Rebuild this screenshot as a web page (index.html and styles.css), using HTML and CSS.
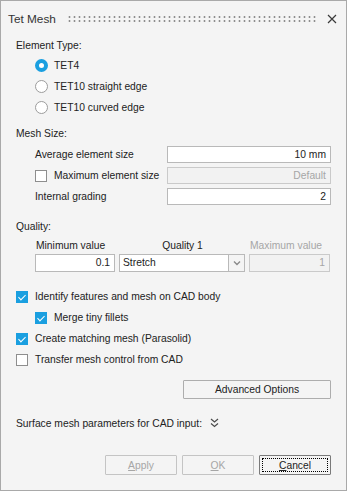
FILE: index.html
```html
<!DOCTYPE html>
<html lang="en">
<head>
  <meta charset="UTF-8" />
  <title>Tet Mesh</title>
  <link rel="stylesheet" href="styles.css">
</head>
<body>
  <div class="dialog">
    <!-- Barra de título -->
    <div class="titlebar">
      <span class="title">Tet Mesh</span>
      <span class="grip"></span>
      <svg class="close" width="10" height="10" viewBox="0 0 10 10">
        <path d="M1 1 L9 9 M9 1 L1 9" stroke="#3a3a3a" stroke-width="1.2" fill="none" />
      </svg>
    </div>

    <div class="content">
      <!-- Tipo de elemento -->
      <div class="group-label">Element Type:</div>
      <div class="radio-row"><span class="radio checked"></span>TET4</div>
      <div class="radio-row"><span class="radio"></span>TET10 straight edge</div>
      <div class="radio-row"><span class="radio"></span>TET10 curved edge</div>

      <!-- Tamaño de malla -->
      <div class="group-label mesh-label">Mesh Size:</div>
      <div class="field-row">
        <span class="field-name">Average element size</span>
        <span class="input">10 mm</span>
      </div>
      <div class="field-row">
        <span class="field-name"><span class="check"></span><span class="check-text">Maximum element size</span></span>
        <span class="input disabled">Default</span>
      </div>
      <div class="field-row">
        <span class="field-name">Internal grading</span>
        <span class="input">2</span>
      </div>

      <!-- Calidad -->
      <div class="group-label quality-label">Quality:</div>
      <div class="quality-grid">
        <span class="q-head">Minimum value</span>
        <span class="q-head center">Quality 1</span>
        <span class="q-head muted">Maximum value</span>
        <span class="input">0.1</span>
        <span class="select">
          <span class="select-text">Stretch</span>
          <span class="select-btn">
            <svg width="8" height="6" viewBox="0 0 8 6"><path d="M1 1.5 L4 4.5 L7 1.5" stroke="#8a8a8a" stroke-width="1.4" fill="none" /></svg>
          </span>
        </span>
        <span class="input disabled">1</span>
      </div>

      <!-- Opciones -->
      <div class="checks">
        <div class="check-row"><span class="check checked"></span>Identify features and mesh on CAD body</div>
        <div class="check-row sub"><span class="check checked"></span>Merge tiny fillets</div>
        <div class="check-row"><span class="check checked"></span>Create matching mesh (Parasolid)</div>
        <div class="check-row"><span class="check"></span>Transfer mesh control from CAD</div>
      </div>

      <div class="adv-row">
        <button class="btn adv">Advanced Options</button>
      </div>

      <div class="surface-row">
        Surface mesh parameters for CAD input:
        <svg class="chevrons" width="9" height="10" viewBox="0 0 9 10">
          <path d="M1 1 L4.5 4 L8 1 M1 5.5 L4.5 8.5 L8 5.5" stroke="#4a4a4a" stroke-width="1.2" fill="none" />
        </svg>
      </div>

      <!-- Botones -->
      <div class="footer">
        <button class="btn disabled"><u>A</u>pply</button>
        <button class="btn disabled"><u>O</u>K</button>
        <button class="btn focused"><span class="focus-ring"><u>C</u>ancel</span></button>
      </div>
    </div>
  </div>
</body>
</html>
```

FILE: styles.css
```css
/* Variables */
:root {
  --bg: #f4f4f4;
  --text: #222;
  --muted: #a6a6a6;
  --blue: #1a9fe0;
  --border: #b9b9b9;
  --font: "Liberation Sans", Arial, sans-serif;
}

* {
  margin: 0;
  padding: 0;
  box-sizing: border-box;
}

body {
  font-family: var(--font);
  font-size: 10.3px;
  color: var(--text);
  background: #fff;
}

.dialog {
  width: 347px;
  height: 491px;
  background: var(--bg);
  border: 1px solid #a9a9a9;
}

/* Barra de título */
.titlebar {
  height: 35px;
  display: flex;
  align-items: center;
  padding: 0 9px 0 7px;
}

.title {
  font-size: 11.8px;
  color: #333;
  width: 59px;
}

.grip {
  flex: 1;
  height: 8px;
  margin-right: 10px;
  background-image: radial-gradient(circle, #8e8e8e 0.9px, transparent 1.2px);
  background-size: 5px 4px;
}

/* Contenido */
.content {
  padding: 0 15px 0 15px;
}

.group-label {
  height: 19px;
  line-height: 19px;
}

.mesh-label {
  margin-top: 6px;
  height: 20px;
  line-height: 20px;
}

.quality-label {
  margin-top: 10px;
  height: 20px;
  line-height: 20px;
}

.radio-row {
  height: 21px;
  display: flex;
  align-items: center;
  padding-left: 19px;
}

.radio {
  width: 13px;
  height: 13px;
  border-radius: 50%;
  border: 1px solid #9c9c9c;
  background: #fff;
  margin-right: 6px;
}

.radio.checked {
  border: 4px solid var(--blue);
}

.field-row {
  height: 21px;
  display: flex;
  align-items: center;
  justify-content: space-between;
  padding-left: 19px;
}

.field-name {
  display: flex;
  align-items: center;
}

.check-text {
  margin-left: 7px;
}

.input {
  width: 164px;
  height: 17px;
  line-height: 15px;
  border: 1px solid var(--border);
  background: #fff;
  text-align: right;
  padding-right: 4px;
}

.input.disabled {
  background: #f2f2f2;
  border-color: #cacaca;
  color: var(--muted);
}

/* Calidad */
.quality-grid {
  display: grid;
  grid-template-columns: 80px 126px 81px;
  grid-template-rows: 16px 18px;
  column-gap: 4px;
  row-gap: 1px;
  padding-left: 19px;
  align-items: center;
}

.q-head {
  padding-left: 1px;
}

.q-head.center {
  text-align: center;
}

.q-head.muted {
  color: var(--muted);
}

.quality-grid .input {
  width: auto;
  height: 18px;
  line-height: 16px;
}

.select {
  display: flex;
  height: 18px;
}

.select-text {
  flex: 1;
  border: 1px solid var(--border);
  background: #fff;
  line-height: 16px;
  padding-left: 3px;
}

.select-btn {
  width: 16px;
  border: 1px solid var(--border);
  border-left: none;
  display: flex;
  align-items: center;
  justify-content: center;
}

/* Casillas */
.checks {
  margin-top: 14px;
}

.check-row {
  height: 21px;
  display: flex;
  align-items: center;
}

.check-row .check {
  margin-right: 7px;
}

.check-row.sub {
  padding-left: 19px;
}

.check {
  width: 12px;
  height: 12px;
  border: 1px solid #8e8e8e;
  background: #fff;
  position: relative;
}

.check.checked {
  background: var(--blue);
  border-color: var(--blue);
}

.check.checked::after {
  content: "";
  position: absolute;
  left: 3px;
  top: 1px;
  width: 3px;
  height: 6px;
  border: solid #fff;
  border-width: 0 1.5px 1.5px 0;
  transform: rotate(45deg);
}

/* Botones */
.btn {
  font-family: var(--font);
  font-size: 10.3px;
  color: var(--text);
  background: var(--bg);
  border: 1px solid #adadad;
  border-radius: 1px;
  height: 20px;
}

.adv-row {
  margin-top: 10px;
  display: flex;
  justify-content: flex-end;
}

.adv {
  width: 148px;
  height: 19px;
}

.surface-row {
  margin-top: 14px;
  height: 20px;
  display: flex;
  align-items: center;
}

.chevrons {
  margin-left: 8px;
}

.footer {
  margin-top: 22px;
  display: flex;
  justify-content: flex-end;
  gap: 5px;
}

.footer .btn {
  width: 72px;
}

.btn.disabled {
  color: var(--muted);
  border-color: #c4c4c4;
}

.btn.focused {
  border-color: #7a7a7a;
  padding: 2px;
}

.focus-ring {
  display: block;
  height: 100%;
  line-height: 14px;
  border: 1px dotted #000;
}
```
